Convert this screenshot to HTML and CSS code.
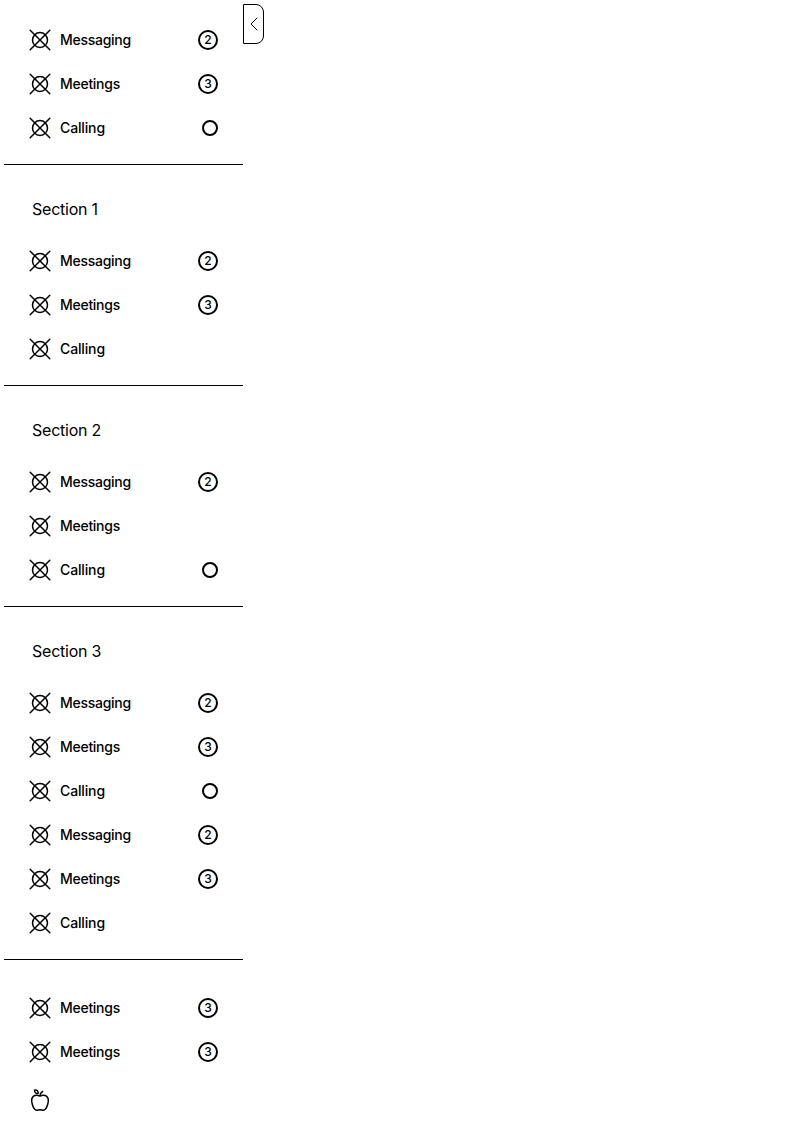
FILE: index.html
```html
<!DOCTYPE html>
<html lang="en">
<head>
<meta charset="utf-8">
<title>Side navigation</title>
<link rel="stylesheet" href="styles.css">
</head>
<body>
<svg class="defs" aria-hidden="true">
  <symbol id="placeholder" viewBox="0 0 24 24"><g fill="none" stroke="#000" stroke-width="1.5" stroke-linecap="round"><circle cx="12" cy="12" r="7.5"/><path d="M2.2 2.2 21.8 21.8M21.8 2.2 2.2 21.8"/></g></symbol>
</svg>
<div class="layout">
  <nav class="sidenav">
    <ul class="list">
      <li class="item"><svg class="icon"><use href="#placeholder"/></svg><span class="label">Messaging</span><span class="badge">2</span></li>
      <li class="item"><svg class="icon"><use href="#placeholder"/></svg><span class="label">Meetings</span><span class="badge">3</span></li>
      <li class="item"><svg class="icon"><use href="#placeholder"/></svg><span class="label short">Calling</span><span class="badge dot"></span></li>
    </ul>
    <h2 class="heading">Section 1</h2>
    <ul class="list">
      <li class="item"><svg class="icon"><use href="#placeholder"/></svg><span class="label">Messaging</span><span class="badge">2</span></li>
      <li class="item"><svg class="icon"><use href="#placeholder"/></svg><span class="label">Meetings</span><span class="badge">3</span></li>
      <li class="item"><svg class="icon"><use href="#placeholder"/></svg><span class="label short">Calling</span></li>
    </ul>
    <h2 class="heading">Section 2</h2>
    <ul class="list">
      <li class="item"><svg class="icon"><use href="#placeholder"/></svg><span class="label">Messaging</span><span class="badge">2</span></li>
      <li class="item"><svg class="icon"><use href="#placeholder"/></svg><span class="label">Meetings</span></li>
      <li class="item"><svg class="icon"><use href="#placeholder"/></svg><span class="label short">Calling</span><span class="badge dot"></span></li>
    </ul>
    <h2 class="heading">Section 3</h2>
    <ul class="list">
      <li class="item"><svg class="icon"><use href="#placeholder"/></svg><span class="label">Messaging</span><span class="badge">2</span></li>
      <li class="item"><svg class="icon"><use href="#placeholder"/></svg><span class="label">Meetings</span><span class="badge">3</span></li>
      <li class="item"><svg class="icon"><use href="#placeholder"/></svg><span class="label short">Calling</span><span class="badge dot"></span></li>
      <li class="item"><svg class="icon"><use href="#placeholder"/></svg><span class="label">Messaging</span><span class="badge">2</span></li>
      <li class="item"><svg class="icon"><use href="#placeholder"/></svg><span class="label">Meetings</span><span class="badge">3</span></li>
      <li class="item"><svg class="icon"><use href="#placeholder"/></svg><span class="label short">Calling</span></li>
    </ul>
    <ul class="list fixed">
      <li class="item"><svg class="icon"><use href="#placeholder"/></svg><span class="label">Meetings</span><span class="badge">3</span></li>
      <li class="item"><svg class="icon"><use href="#placeholder"/></svg><span class="label">Meetings</span><span class="badge">3</span></li>
    </ul>
    <div class="brand">
      <svg class="icon" viewBox="0 0 24 24"><g fill="none" stroke="#000" stroke-width="1.5" stroke-linecap="round" stroke-linejoin="round"><path d="M12 8.1C9.9 7.1 7.5 6.6 5.6 8.1 3.5 9.8 3.3 13 4.2 16 5 19 6.7 22.2 8.8 22.2 10.2 22.2 10.6 21.7 12 21.7S13.8 22.2 15.2 22.2C17.3 22.2 19 19 19.8 16 20.7 13 20.5 9.8 18.4 8.1 16.5 6.6 14.1 7.1 12 8.1ZM12 8C12.1 6 12.9 4.5 14.6 3.5"/><path d="M10.1 5.4C7.9 5.7 6.4 4.4 6.5 2.1 8.7 1.4 10.4 2.9 10.1 5.4Z"/></g></svg>
    </div>
  </nav>
  <button class="grabber" aria-label="Collapse navigation"><svg width="8" height="14" viewBox="0 0 8 14"><path d="M7 1 1 7 7 13" fill="none" stroke="#000" stroke-linecap="round" stroke-linejoin="round"/></svg></button>
</div>
</body>
</html>
```

FILE: styles.css
```css
* { box-sizing: border-box; }
body { margin: 0; background: #fff; color: #000; font-family: Inter, "Liberation Sans", sans-serif; }
.defs { display: none; }
.layout { display: flex; align-items: flex-start; padding: 4px; }
.sidenav { width: 239px; padding-top: 16px; }
.list { display: grid; gap: 4px; margin: 0; padding: 0 0 16px; list-style: none; border-bottom: 1px solid #000; }
.item { display: flex; align-items: center; gap: 8px; height: 40px; padding: 0 25px 0 24px; font-size: 14px; font-weight: 500; line-height: 20px; }
.icon { display: block; width: 24px; height: 24px; flex: none; }
.label { flex: 1; letter-spacing: -0.28px; }
.short { letter-spacing: -0.14px; }
.badge { display: flex; align-items: center; justify-content: center; width: 20px; height: 20px; border: 2px solid #000; border-radius: 50%; font-size: 12px; font-weight: 500; line-height: 16px; }
.dot { width: 16px; height: 16px; }
.heading { margin: 16px 0 4px; padding: 16px 28px; font-size: 16px; font-weight: 400; line-height: 24px; letter-spacing: -0.23px; }
.fixed { padding: 28px 0 16px; border-bottom: 0; }
.brand { padding: 0 24px; }
.grabber { display: flex; align-items: center; justify-content: center; width: 21px; height: 40px; padding: 0; background: #fff; border: 1px solid #000; border-radius: 0 8px 8px 0; }
```
